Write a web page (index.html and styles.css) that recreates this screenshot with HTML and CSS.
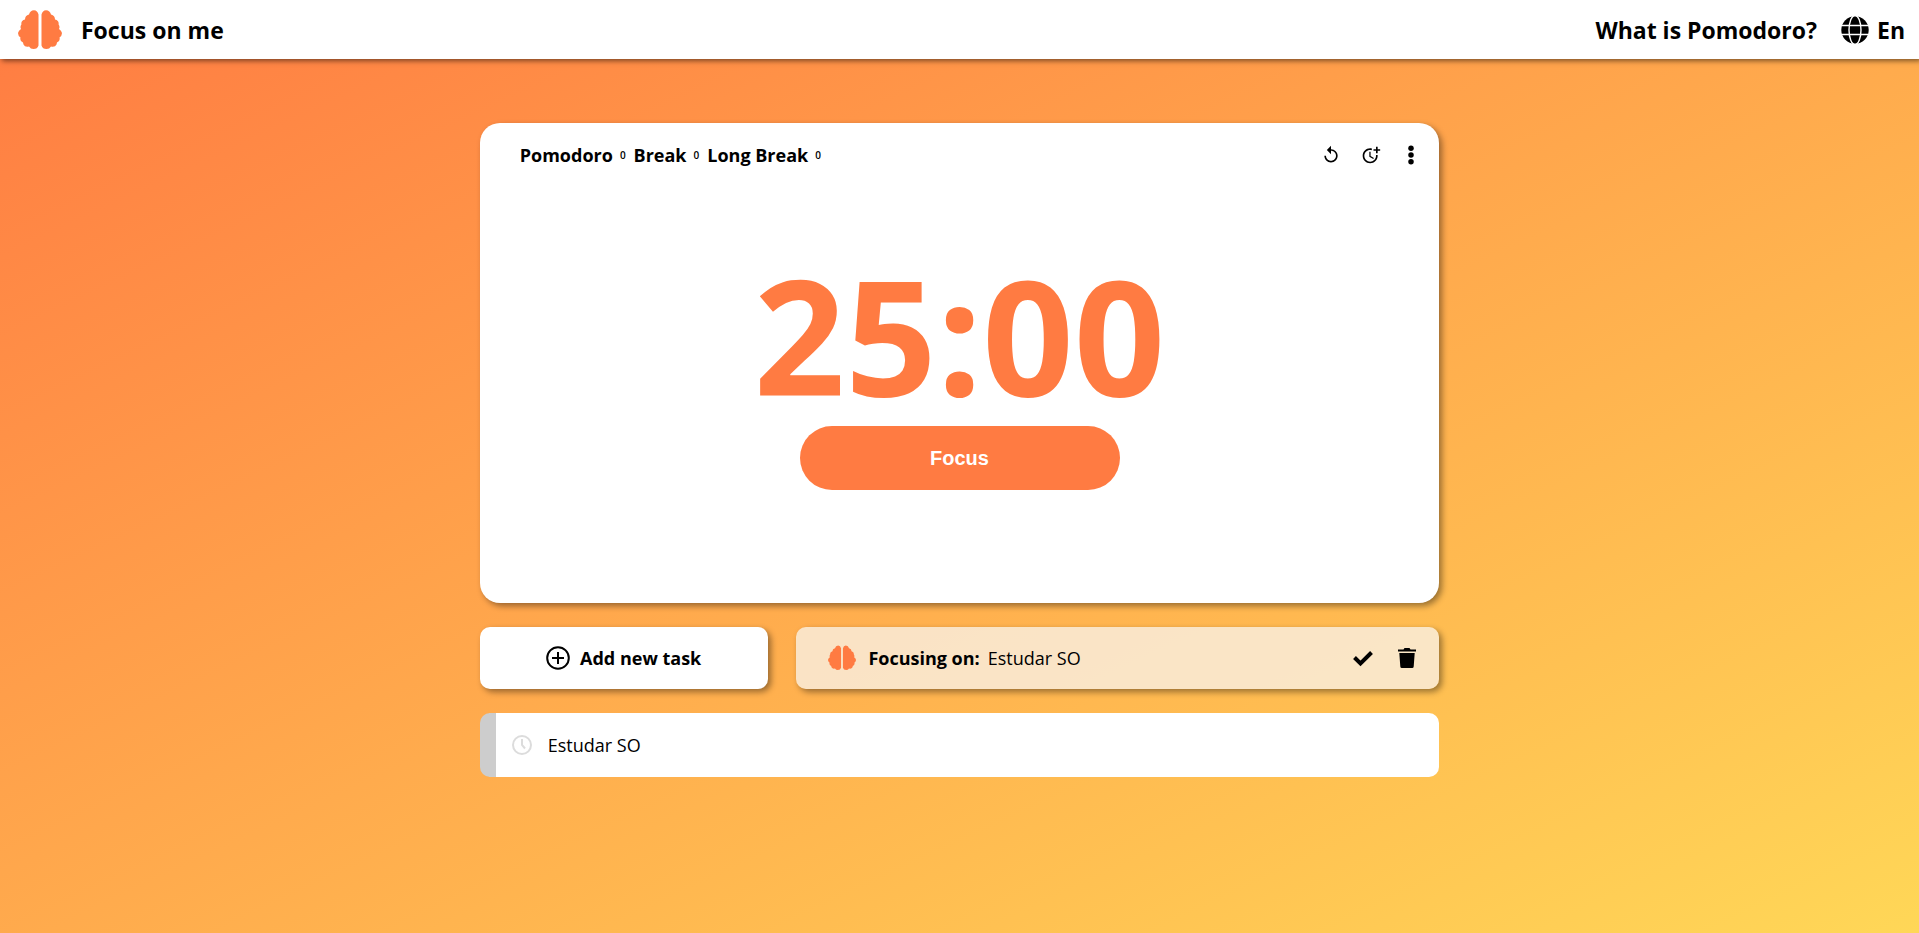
FILE: index.html
```html
<!DOCTYPE html>
<html lang="en">
<head>
<meta charset="utf-8">
<meta name="viewport" content="width=device-width, initial-scale=1">
<title>Focus on me</title>
<link rel="stylesheet" href="styles.css">
</head>
<body>
<svg class="symbols" aria-hidden="true">
  <symbol id="brain" viewBox="0 0 44 40">
    <path id="half" d="M20.5 4.5V35.5Q19.500 39 15.500 39Q12.500 39 11 36.500Q7 37.500 5.500 34.500L5 32.500Q1.500 31 2.500 27.500Q-.5 25.500 .2 22.500Q.6 20.500 3 19Q1.800 16.500 3.400 14.500Q2.800 10.500 7 9.500Q7 5.500 11 4.500Q12 .5 16 .3Q19.500 .5 20.500 4.500Z"/>
    <use href="#half" transform="matrix(-1 0 0 1 44 0)"/>
  </symbol>
</svg>
<header class="topbar">
  <a class="brand" href="#"><svg class="logo"><use href="#brain"/></svg><span>Focus on me</span></a>
  <nav class="nav">
    <a href="#">What is Pomodoro?</a>
    <button class="lang" type="button">
      <svg class="globe" viewBox="0 0 28 28" aria-hidden="true">
        <circle cx="14" cy="14" r="13.700"/>
        <g fill="none" stroke="#fff" stroke-width="1.400"><ellipse cx="14" cy="14" rx="6" ry="14.500"/><path d="M0 9.500H28M0 18.500H28"/></g>
      </svg>
      <span>En</span>
    </button>
  </nav>
</header>
<main class="content">
  <section class="timer">
    <div class="timer-head">
      <ul class="counts">
        <li>Pomodoro <small>0</small></li>
        <li>Break <small>0</small></li>
        <li>Long Break <small>0</small></li>
      </ul>
      <div class="tools">
        <button type="button" aria-label="Restart"><svg class="icon" viewBox="0 0 24 24"><path d="M12 5V1L7 6l5 5V7c3.310 0 6 2.690 6 6s-2.690 6-6 6-6-2.690-6-6H4c0 4.420 3.580 8 8 8s8-3.580 8-8-3.580-8-8-8z"/></svg></button>
        <button type="button" aria-label="Add time"><svg class="icon" viewBox="0 0 24 24"><path d="M10 8v6l4.700 2.900.8-1.200-4-2.400V8z"/><path d="M17.920 12c.05.330.08.660.08 1 0 3.900-3.100 7-7 7s-7-3.100-7-7 3.100-7 7-7c.7 0 1.370.1 2 .290V4.230C12.360 4.080 11.690 4 11 4c-5 0-9 4-9 9s4 9 9 9 9-4 9-9c0-.340-.02-.670-.06-1h-2.020z"/><path d="M20 5V2h-2v3h-3v2h3v3h2V7h3V5z"/></svg></button>
        <button type="button" aria-label="Options"><svg class="icon" viewBox="0 0 24 24"><circle cx="12" cy="4" r="3.300"/><circle cx="12" cy="12" r="3.300"/><circle cx="12" cy="20" r="3.300"/></svg></button>
      </div>
    </div>
    <div class="timer-body">
      <div class="clock" role="timer">25:00</div>
      <button class="focus" type="button">Focus</button>
    </div>
  </section>
  <div class="actions">
    <button class="add" type="button">
      <svg class="plus" viewBox="0 0 24 24" aria-hidden="true"><circle cx="12" cy="12" r="10.800"/><path d="M12 6v12M6 12h12"/></svg>
      <span>Add new task</span>
    </button>
    <section class="current">
      <svg class="mini"><use href="#brain"/></svg>
      <p class="current-text"><strong>Focusing on:</strong> <span>Estudar SO</span></p>
      <div class="current-tools">
        <button type="button" aria-label="Complete task"><svg class="icon" viewBox="0 0 20 20"><path class="tick" d="M1.500 9.500l6 6L18.500 4.500"/></svg></button>
        <button type="button" aria-label="Delete task"><svg class="icon" viewBox="0 0 20 20"><path d="M1 1.500h5.500L7.500 0h5l1 1.500H19v2H1zM2.300 5h15.400l-1 13.500q-.1 1.500-1.600 1.500H4.900q-1.500 0-1.600-1.500z"/></svg></button>
      </div>
    </section>
  </div>
  <ul class="tasks">
    <li class="task">
      <svg class="pending" viewBox="0 0 20 20" aria-hidden="true"><circle cx="10" cy="10" r="9"/><path d="M10 4v6l3 3.500"/></svg>
      <span>Estudar SO</span>
    </li>
  </ul>
</main>
</body>
</html>
```
FILE: styles.css
```css
* { box-sizing: border-box; margin: 0; padding: 0; }

body {
  min-height: 100vh;
  background: linear-gradient(155deg, #ff7b42, #ffd757);
  font-family: "Segoe UI", "Open Sans", sans-serif;
  font-size: 18px;
  line-height: 24px;
  color: #000;
}

button { border: 0; background: none; font: inherit; color: inherit; cursor: pointer; }
a { color: inherit; text-decoration: none; }
ul { list-style: none; }
svg { display: block; flex: none; }

.symbols { position: absolute; width: 0; height: 0; }

.topbar {
  display: flex;
  align-items: center;
  justify-content: space-between;
  padding: 10px 14px 9px 18px;
  background: #fff;
  box-shadow: 2px 2px 5px rgba(0, 0, 0, .5);
  font-size: 23px;
  font-weight: 700;
}
.brand, .nav, .lang { display: flex; align-items: center; }
.brand { gap: 19px; }
.nav { gap: 24px; }
.lang { gap: 8px; }
.logo { width: 44px; height: 40px; fill: #ff7b42; }
.globe { width: 28px; height: 28px; }

.content {
  display: flex;
  flex-direction: column;
  gap: 24px;
  width: 50%;
  min-width: 640px;
  margin: 0 auto;
  padding-top: 64px;
}

.timer {
  min-height: 480px;
  border-radius: 20px;
  background: #fff;
  box-shadow: 3px 3px 6px rgba(0, 0, 0, .4);
}
.timer-head {
  display: flex;
  align-items: center;
  justify-content: space-between;
  padding: 20px 18px 0 40px;
}
.counts { display: flex; gap: 8px; font-weight: 700; }
.counts li { display: flex; align-items: center; gap: 7px; }
.counts small { font-size: 10px; font-weight: 600; }
.tools { display: flex; gap: 20px; }
.tools .icon { width: 20px; height: 20px; }
.timer-body { display: flex; flex-direction: column; align-items: center; gap: 5px; padding-top: 80px; }
.clock { font-size: 160px; line-height: 174px; font-weight: 700; color: #ff7b42; }
.focus {
  width: 320px;
  height: 64px;
  border-radius: 32px;
  background: #ff7b42;
  color: #fff;
  font-family: Arial, "Liberation Sans", sans-serif;
  font-size: 20px;
  font-weight: 700;
}

.actions { display: grid; grid-template-columns: 30% 67%; justify-content: space-between; }
.add, .current {
  display: flex;
  align-items: center;
  min-height: 62px;
  border-radius: 10px;
  box-shadow: 3px 3px 6px rgba(0, 0, 0, .4);
}
.add { justify-content: center; gap: 10px; background: #fff; font-weight: 700; }
.plus { width: 24px; height: 24px; fill: none; stroke: #000; stroke-width: 2; }
.current { gap: 12px; padding: 0 22px 0 32px; background: rgba(249, 240, 228, .8); }
.mini { width: 28px; height: 26px; fill: #ff7b42; }
.current-text { flex: 1; display: flex; gap: 8px; }
.current-text strong { font-weight: 700; }
.current-tools { display: flex; gap: 24px; }
.current-tools .icon { width: 20px; height: 20px; }
.tick { fill: none; stroke: #000; stroke-width: 4; }

.task {
  display: flex;
  align-items: center;
  gap: 16px;
  min-height: 64px;
  padding-left: 16px;
  border-left: 16px solid #cdcdcd;
  border-radius: 10px;
  background: #fff;
}
.pending { width: 20px; height: 20px; fill: none; stroke: #dcdcdc; stroke-width: 2; }
```
